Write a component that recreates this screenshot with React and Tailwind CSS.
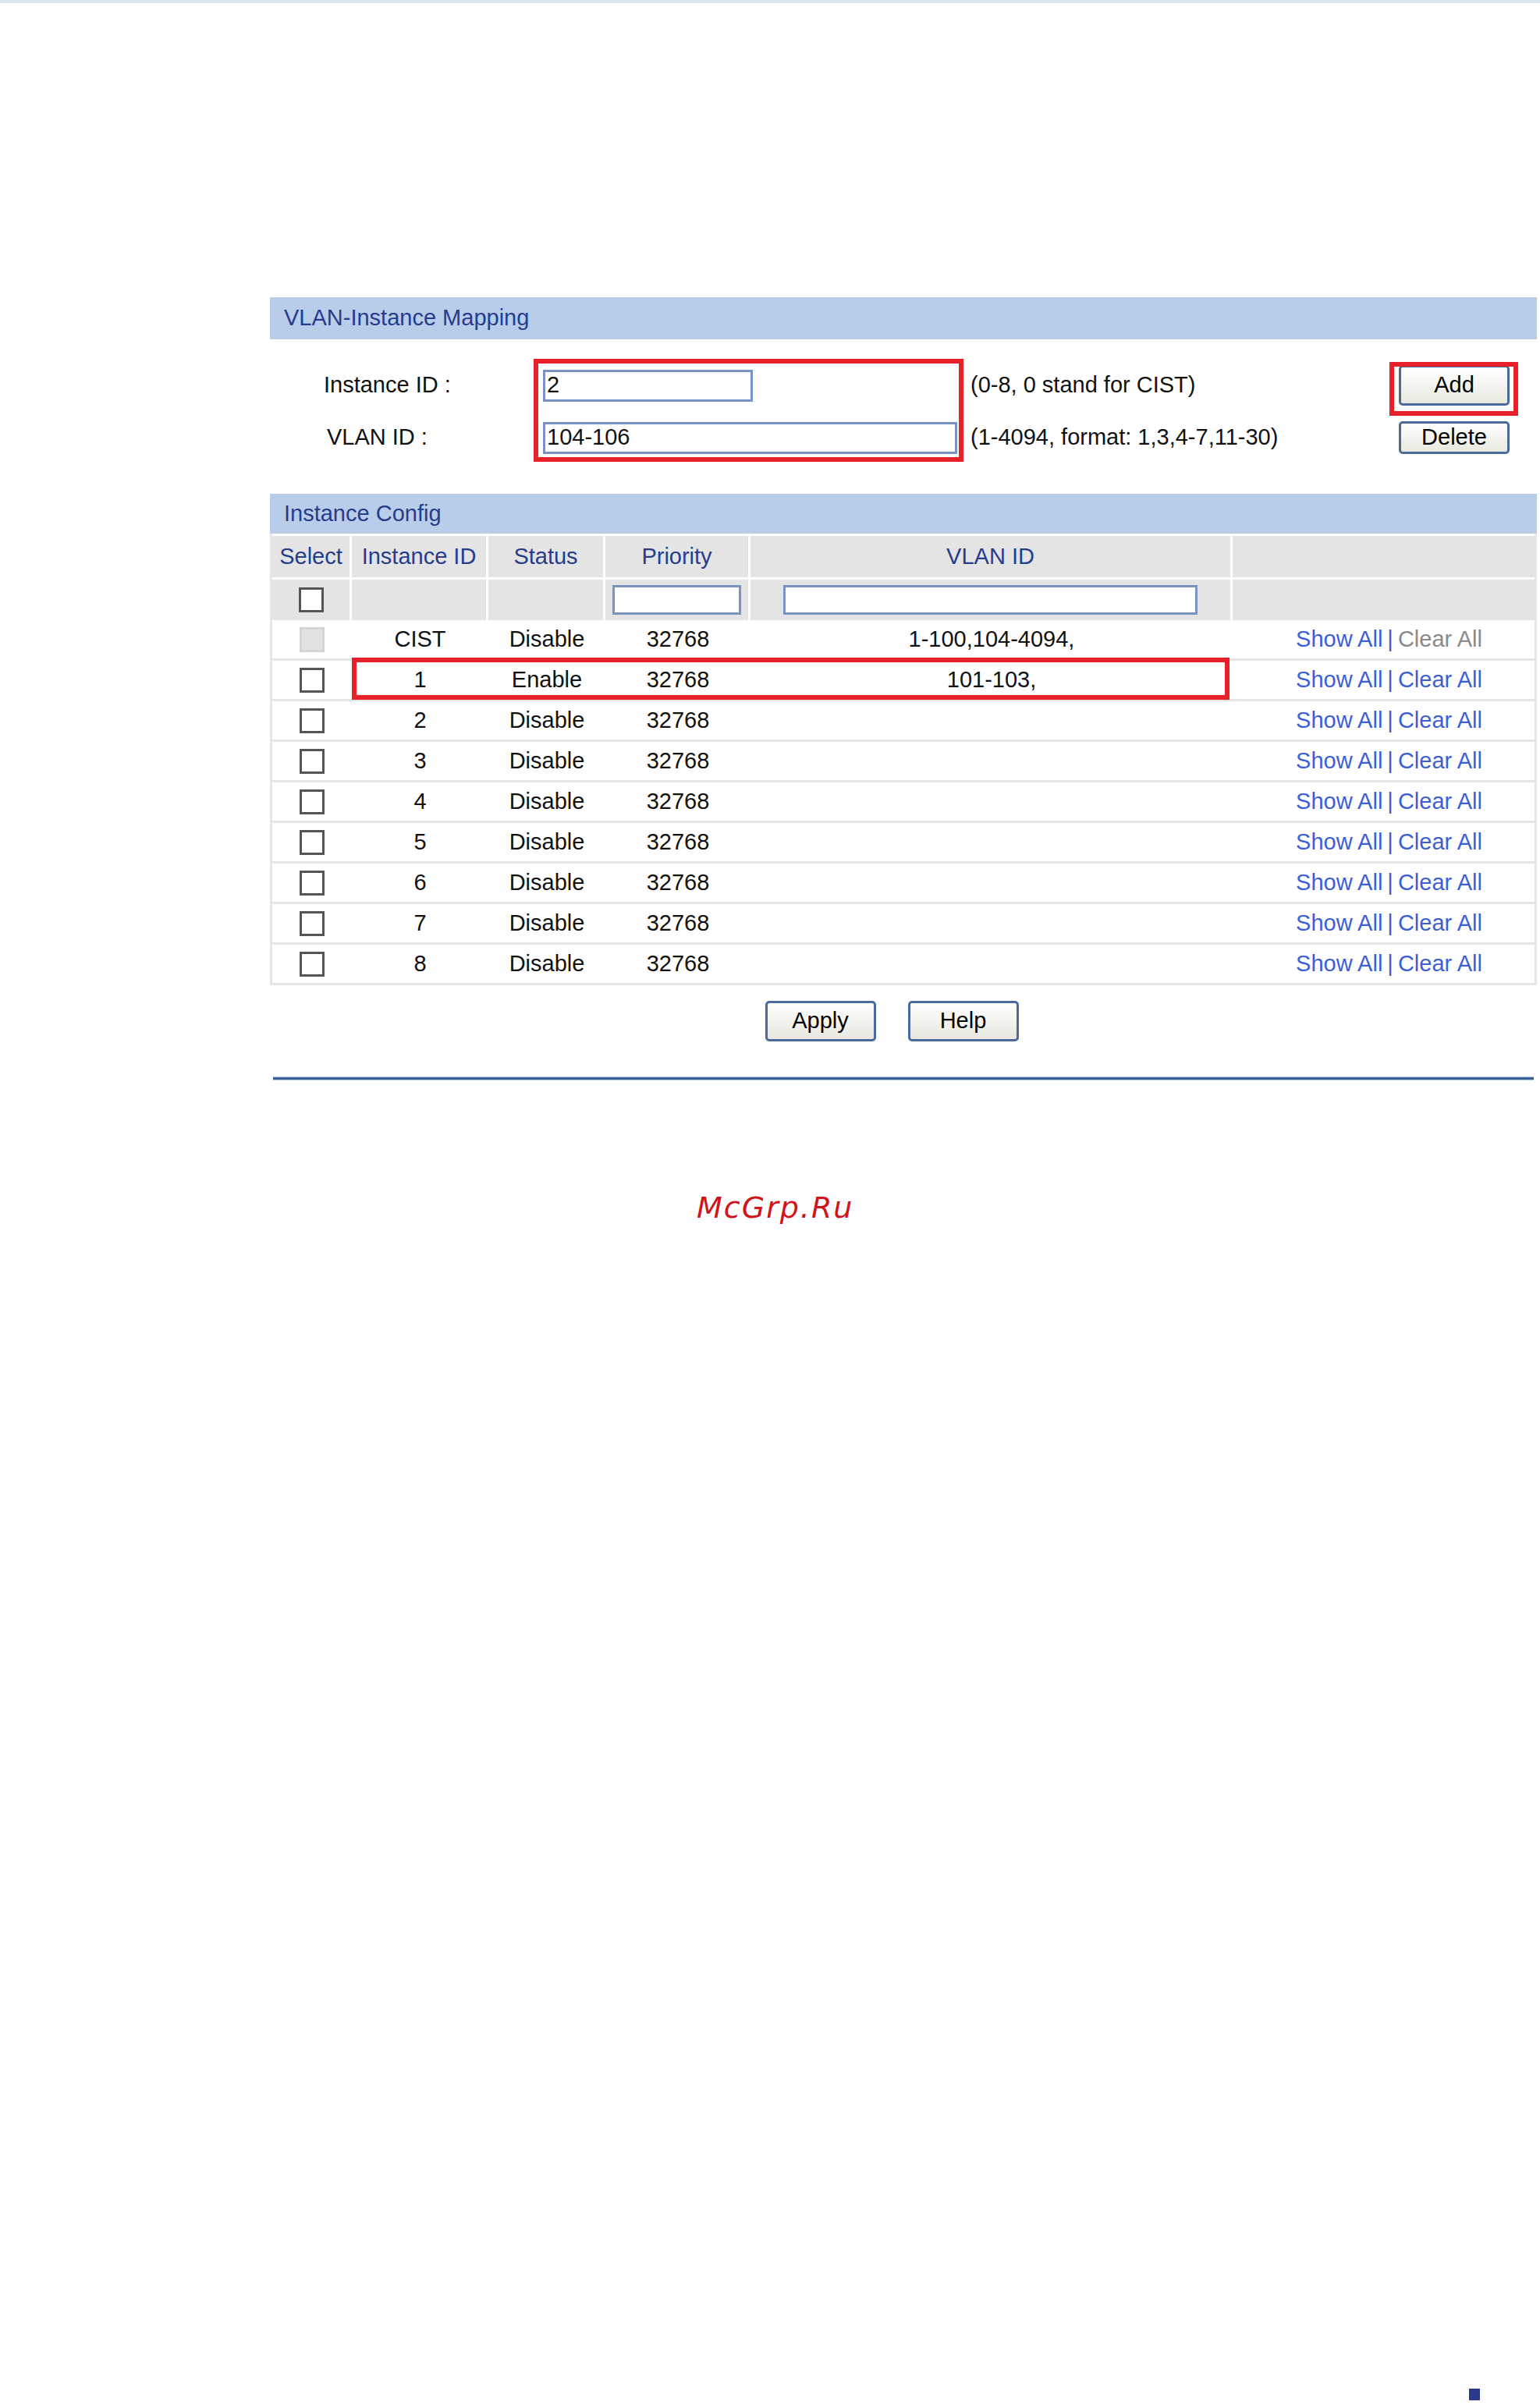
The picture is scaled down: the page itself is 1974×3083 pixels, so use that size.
const rows = [
  { id: 'CIST', status: 'Disable', vlan: '1-100,104-4094,', cist: true },
  { id: '1', status: 'Enable', vlan: '101-103,', mark: true },
  { id: '2', status: 'Disable', vlan: '' },
  { id: '3', status: 'Disable', vlan: '' },
  { id: '4', status: 'Disable', vlan: '' },
  { id: '5', status: 'Disable', vlan: '' },
  { id: '6', status: 'Disable', vlan: '' },
  { id: '7', status: 'Disable', vlan: '' },
  { id: '8', status: 'Disable', vlan: '' },
];

const cols = 'grid grid-cols-[102px_175px_150px_186px_618px_1fr]';

function Box({ grey }) {
  return (
    <div className={`w-[32px] h-[32px] border-[3px] ${grey ? 'border-[#d4d4d4] bg-[#e2e2e2]' : 'border-[#555] bg-white'}`} />
  );
}

function Btn({ children, h = 'h-[52px]' }) {
  return (
    <div className={`w-[142px] ${h} rounded-[5px] border-[3px] border-[#4a6a9c] bg-gradient-to-b from-white to-[#e8e8e0] flex items-center justify-center text-[29px] text-black`}>
      {children}
    </div>
  );
}

export default function App() {
  return (
    <div className="relative w-[1974px] h-[3083px] bg-white font-[family-name:Liberation_Sans,Arial,sans-serif] text-[29px] text-[#111]">
      <div className="h-[4px] bg-[#dde4ec]" />
      <div className="ml-[346px] w-[1624px] pt-[377px]">
        <div className="h-[54px] bg-[#b8cdea] flex items-center pl-[18px] text-[#283c8c]">VLAN-Instance Mapping</div>
        <div className="relative h-[198px] pt-[31px]">
          <div className="absolute left-[338px] top-[25px] w-[551px] h-[132px] border-[6px] border-[#e8202a]" />
          <div className="absolute left-[1435px] top-[29px] w-[165px] h-[69px] border-[6px] border-[#e8202a]" />
          <div className="flex items-center h-[56px]">
            <div className="w-[350px] pl-[69px]">Instance ID :</div>
            <div className="w-[269px] h-[41px] border-[3px] border-[#7a93c0] flex items-center pl-[2px]">2</div>
            <div className="ml-[279px]">(0-8, 0 stand for CIST)</div>
            <div className="ml-auto mr-[35px]"><Btn>Add</Btn></div>
          </div>
          <div className="flex items-center h-[56px] mt-[11px]">
            <div className="w-[350px] pl-[73px]">VLAN ID :</div>
            <div className="w-[531px] h-[41px] border-[3px] border-[#7a93c0] flex items-center pl-[2px]">104-106</div>
            <div className="ml-[17px]">(1-4094, format: 1,3,4-7,11-30)</div>
            <div className="ml-auto mr-[35px]"><Btn h="h-[42px]">Delete</Btn></div>
          </div>
        </div>
        <div className="h-[51px] bg-[#b8cdea] flex items-center pl-[18px] text-[#283c8c]">Instance Config</div>
        <div className="border-x-[3px] border-[#e6e6e6] pt-[3px]">
          <div className={`${cols} h-[53px] bg-[#e4e4e4] text-[#283c8c]`}>
            {['Select', 'Instance ID', 'Status', 'Priority', 'VLAN ID', ''].map((h, i) => (
              <div key={i} className="flex items-center justify-center border-r-[3px] border-white last:border-r-0">{h}</div>
            ))}
          </div>
          <div className={`${cols} h-[55px] bg-[#e4e4e4] border-t-[3px] border-white`}>
            <div className="flex items-center justify-center border-r-[3px] border-white"><Box /></div>
            <div className="border-r-[3px] border-white" />
            <div className="border-r-[3px] border-white" />
            <div className="flex items-center justify-center border-r-[3px] border-white"><div className="w-[165px] h-[38px] border-[3px] border-[#7a93c0] bg-white" /></div>
            <div className="flex items-center justify-center border-r-[3px] border-white"><div className="w-[531px] h-[38px] border-[3px] border-[#7a93c0] bg-white" /></div>
            <div />
          </div>
          {rows.map((r) => (
            <div key={r.id} className={`${cols} relative h-[52px] border-b-[3px] border-[#e6e6e6]`}>
              {r.mark && <div className="absolute left-[102px] top-[-4px] w-[1125px] h-[54px] border-[6px] border-[#e8202a]" />}
              <div className="flex items-center justify-center"><Box grey={r.cist} /></div>
              <div className="flex items-center justify-center">{r.id}</div>
              <div className="flex items-center justify-center">{r.status}</div>
              <div className="flex items-center justify-center">32768</div>
              <div className="flex items-center justify-center">{r.vlan}</div>
              <div className="flex items-center justify-center pl-[14px]">
                <span className="text-[#3c5ed6]">Show All</span>
                <span className="text-[#3c5ed6] mx-[6px]">|</span>
                <span className={r.cist ? 'text-[#8a8a8a]' : 'text-[#3c5ed6]'}>Clear All</span>
              </div>
            </div>
          ))}
        </div>
        <div className="flex justify-center gap-[41px] pt-[20px] pr-[30px]">
          <Btn>Apply</Btn>
          <Btn>Help</Btn>
        </div>
        <div className="mt-[45px] ml-[4px] w-[1616px] h-[5px] bg-[#3a5f96] border-y border-[#b8cdea]" />
        <div className="mt-[135px] ml-[547px] text-[38px] italic text-[#d0141c] font-[family-name:DejaVu_Sans,sans-serif] tracking-[2px]">McGrp.Ru</div>
      </div>
      <div className="absolute left-[1883px] top-[3062px] w-[14px] h-[15px] bg-[#2b3a8c]" />
    </div>
  );
}
